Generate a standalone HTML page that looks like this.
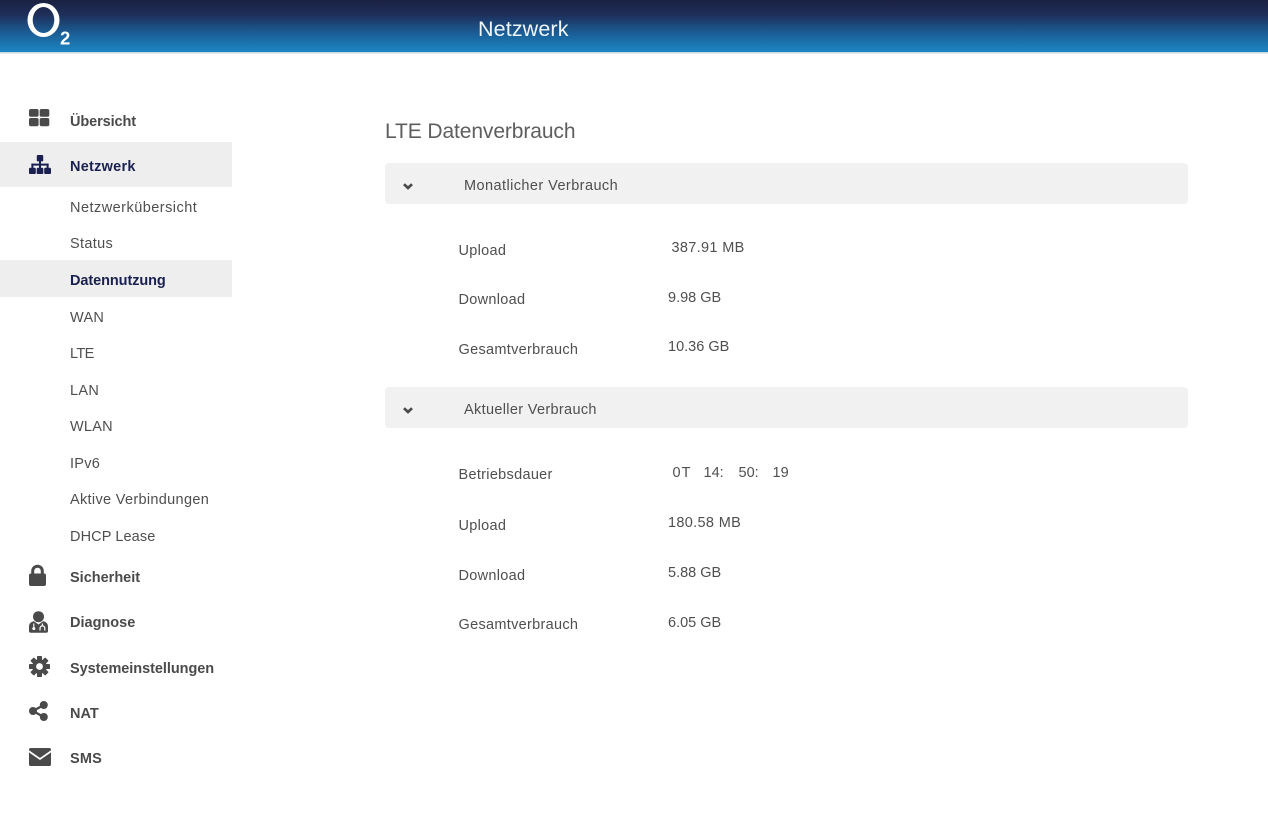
<!DOCTYPE html>
<html lang="de">
<head>
<meta charset="utf-8">
<title>Netzwerk</title>
<style>
html,body{margin:0;padding:0;background:#fff}
body{width:1268px;height:813px;overflow:hidden;position:relative;font-family:"Liberation Sans",Arial,sans-serif;color:#4a4a4a}
.hdr{position:absolute;left:0;top:0;width:1268px;height:52px;background:linear-gradient(#1b2141 0%,#1e2f5a 28%,#1b5f98 65%,#1c86c2 100%)}
.hl{position:absolute;left:0;top:52px;width:1268px;height:2px;background:linear-gradient(#bcd0dc,#eef1f3)}
.t{position:absolute;white-space:nowrap;line-height:20px;height:20px}
.title{left:478px;top:18px;font-size:21.5px;letter-spacing:.12px;color:#eef6fb;line-height:22px}
.b{left:70px;font-size:14.5px;font-weight:bold;color:#4a4a4a}
.s{left:70px;font-size:14.5px;color:#4f4f4f;letter-spacing:.1px}
.n{color:#1a2050}
.sel{position:absolute;left:0;width:232px;background:#eeeeef}
.h1{left:385px;top:121px;font-size:21px;letter-spacing:-.1px;color:#5e5e5e;line-height:22px}
.bar{position:absolute;left:385px;width:803px;height:41px;background:#f1f1f1;border-radius:4px}
.bt{left:464px;font-size:14.5px;color:#4f4f4f;letter-spacing:.43px}
.l{left:458.5px;font-size:14.5px;color:#4f4f4f;letter-spacing:.3px}
.v{font-size:14.5px;color:#4f4f4f}
.mb{letter-spacing:.33px}
svg{position:absolute;overflow:visible}
</style>
</head>
<body>
<div class="hdr"></div><div class="hl"></div>

<svg style="left:24px;top:0" width="50" height="48" viewBox="0 0 50 48">
<path fill-rule="evenodd" fill="#fff" d="M19.500 3a16 17 0 1 0 0 34a16 17 0 1 0 0-34zM19.500 7a10.800 13 0 1 1 0 26a10.800 13 0 1 1 0-26z"/>
<text x="36" y="44.500" font-family="Liberation Sans" font-weight="bold" font-size="18.500" fill="#fff">2</text>
</svg>
<div class="t title">Netzwerk</div>

<div class="sel" style="top:142px;height:45px"></div>
<div class="sel" style="top:260px;height:37px"></div>

<svg style="left:29px;top:109px" width="21" height="18" viewBox="0 0 21 18"><g fill="#4a4a4a"><rect x="0" y="0" width="9.600" height="7.800" rx="1.800"/><rect x="10.700" y="0" width="9.600" height="7.800" rx="1.800"/><rect x="0" y="9" width="9.600" height="8.200" rx="1.800"/><rect x="10.700" y="9" width="9.600" height="8.200" rx="1.800"/></g></svg>
<div class="t b" style="top:111.500px;letter-spacing:-.1px">Übersicht</div>

<svg style="left:29px;top:155px" width="22" height="19" viewBox="0 0 22 19"><g fill="#1a2050"><rect x="7.800" y="0" width="6.400" height="6.400" rx="1"/><rect x="0" y="12.800" width="6.800" height="6.200" rx="1.300"/><rect x="7.700" y="12.800" width="6.600" height="6.200" rx="1.300"/><rect x="15.200" y="12.800" width="6.800" height="6.200" rx="1.300"/><rect x="10" y="5" width="2" height="9"/><rect x="2.400" y="8.600" width="17.200" height="2"/><rect x="2.400" y="8.600" width="2" height="5"/><rect x="17.600" y="8.600" width="2" height="5"/></g></svg>
<div class="t b n" style="top:156.500px;letter-spacing:.25px">Netzwerk</div>

<div class="t s" style="top:198px;letter-spacing:.47px">Netzwerkübersicht</div>
<div class="t s" style="top:234px;letter-spacing:.33px">Status</div>
<div class="t b n" style="top:271px;letter-spacing:-.08px">Datennutzung</div>
<div class="t s" style="top:308px;letter-spacing:.3px">WAN</div>
<div class="t s" style="top:344px;letter-spacing:-.6px">LTE</div>
<div class="t s" style="top:381px;letter-spacing:.3px">LAN</div>
<div class="t s" style="top:417px;letter-spacing:.25px">WLAN</div>
<div class="t s" style="top:454px;letter-spacing:.25px">IPv6</div>
<div class="t s" style="top:490px;letter-spacing:.32px">Aktive Verbindungen</div>
<div class="t s" style="top:527px">DHCP Lease</div>

<svg style="left:29px;top:565px" width="17" height="21" viewBox="0 0 17 21"><path d="M3.700 9.500V6a4.800 4.800 0 0 1 9.600 0v3.500" fill="none" stroke="#4a4a4a" stroke-width="3"/><rect x="0" y="8.500" width="17" height="12.500" rx="2" fill="#4a4a4a"/></svg>
<div class="t b" style="top:567.500px">Sicherheit</div>

<svg style="left:29px;top:611px" width="19" height="22" viewBox="0 0 19 22"><circle cx="9.500" cy="5.700" r="5.500" fill="#4a4a4a"/><path d="M0 20v-4.500c0-3 2.500-5 5-5.200L9.500 13.500 14 10.300c2.500.2 5 2.200 5 5.200V20a1.700 1.700 0 0 1-1.700 1.700H1.700A1.700 1.700 0 0 1 0 20z" fill="#4a4a4a"/><path d="M4.800 12.500v4" stroke="#fff" stroke-width="1.100"/><circle cx="4.800" cy="17.600" r="1.500" fill="#fff"/><path d="M11 19.500v-2.200a2.400 2.400 0 0 1 4.800 0v2.200" fill="none" stroke="#fff" stroke-width="1.200"/><path d="M13.400 12.500v2.500" stroke="#fff" stroke-width="1.100"/></svg>
<div class="t b" style="top:612.500px">Diagnose</div>

<svg style="left:29px;top:656px" width="21" height="21" viewBox="0 0 21 21"><g fill="#4a4a4a"><rect x="8" y="0" width="5" height="21" rx=".8"/><rect x="8" y="0" width="5" height="21" rx=".8" transform="rotate(45 10.500 10.500)"/><rect x="8" y="0" width="5" height="21" rx=".8" transform="rotate(90 10.500 10.500)"/><rect x="8" y="0" width="5" height="21" rx=".8" transform="rotate(135 10.500 10.500)"/><circle cx="10.500" cy="10.500" r="7.300"/></g><circle cx="10.500" cy="10.500" r="3.400" fill="#fff"/></svg>
<div class="t b" style="top:658.500px;letter-spacing:-.05px">Systemeinstellungen</div>

<svg style="left:29px;top:701px" width="19" height="20" viewBox="0 0 19 20"><g fill="#4a4a4a"><circle cx="14.800" cy="4" r="4"/><circle cx="4" cy="10" r="4"/><circle cx="14.800" cy="16" r="4"/></g><path d="M14.800 4L4 10l10.800 6" fill="none" stroke="#4a4a4a" stroke-width="2.400"/></svg>
<div class="t b" style="top:703.500px">NAT</div>

<svg style="left:29px;top:748px" width="22" height="18" viewBox="0 0 22 18"><rect x="0" y="0" width="22" height="18" rx="1.800" fill="#4a4a4a"/><path d="M-.5 3L11 11 22.500 3" fill="none" stroke="#fff" stroke-width="1.700"/></svg>
<div class="t b" style="top:748.500px;letter-spacing:.2px">SMS</div>

<div class="t h1">LTE Datenverbrauch</div>

<div class="bar" style="top:163px"></div>
<svg style="left:403px;top:183px" width="10" height="7" viewBox="0 0 10 7"><path d="M1 1.200L5 5l4-3.800" fill="none" stroke="#4a4a4a" stroke-width="2.700"/></svg>
<div class="t bt" style="top:175.500px">Monatlicher Verbrauch</div>

<div class="t l" style="top:240.500px">Upload</div><div class="t v mb" style="left:671.500px;top:237.500px">387.91 MB</div>
<div class="t l" style="top:289.500px">Download</div><div class="t v" style="left:668px;top:287.500px">9.98 GB</div>
<div class="t l" style="top:339.500px">Gesamtverbrauch</div><div class="t v" style="left:668px;top:336.500px">10.36 GB</div>

<div class="bar" style="top:387px"></div>
<svg style="left:403px;top:407px" width="10" height="7" viewBox="0 0 10 7"><path d="M1 1.200L5 5l4-3.800" fill="none" stroke="#4a4a4a" stroke-width="2.700"/></svg>
<div class="t bt" style="top:399.500px;letter-spacing:.33px">Aktueller Verbrauch</div>

<div class="t l" style="top:464.500px">Betriebsdauer</div>
<div class="t v" style="left:672.500px;top:462.500px;letter-spacing:1px">0T</div><div class="t v" style="left:703.500px;top:462.500px">14:</div><div class="t v" style="left:738.500px;top:462.500px">50:</div><div class="t v" style="left:772.500px;top:462.500px">19</div>
<div class="t l" style="top:515.500px">Upload</div><div class="t v mb" style="left:668px;top:512.500px">180.58 MB</div>
<div class="t l" style="top:565.500px">Download</div><div class="t v" style="left:668px;top:562.500px">5.88 GB</div>
<div class="t l" style="top:614.500px">Gesamtverbrauch</div><div class="t v" style="left:668px;top:612.500px">6.05 GB</div>
</body>
</html>
